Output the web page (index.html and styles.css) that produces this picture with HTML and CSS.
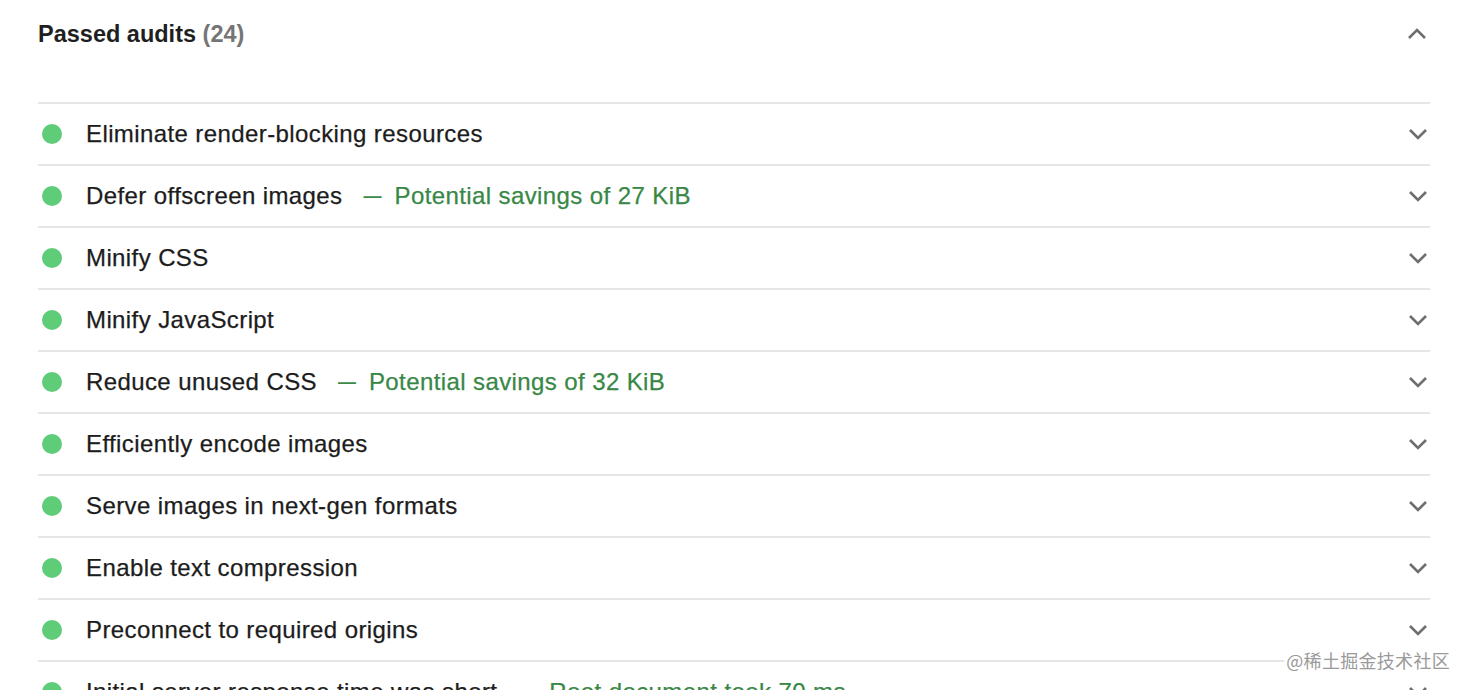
FILE: index.html
```html
<!DOCTYPE html>
<html>
<head>
<meta charset="utf-8">
<link rel="stylesheet" href="styles.css">
</head>
<body>
<div class="page">
  <div class="group-header">
    <div class="group-title">Passed audits <span class="count">(24)</span></div>
    <svg class="chev-up" width="22" height="14" viewBox="0 0 22 14"><path d="M3 11 L11 3 L19 11" fill="none" stroke="#6e6e6e" stroke-width="2.6"/></svg>
  </div>
  <div class="list">
    <div class="row"><span class="dot"></span><span class="title">Eliminate render-blocking resources</span><svg class="chev" width="22" height="14" viewBox="0 0 22 14"><path d="M3 3 L11 11 L19 3" fill="none" stroke="#6e6e6e" stroke-width="2.6"/></svg></div>
    <div class="row"><span class="dot"></span><span class="title">Defer offscreen images</span><span class="sep">—</span><span class="savings">Potential savings of 27 KiB</span><svg class="chev" width="22" height="14" viewBox="0 0 22 14"><path d="M3 3 L11 11 L19 3" fill="none" stroke="#6e6e6e" stroke-width="2.6"/></svg></div>
    <div class="row"><span class="dot"></span><span class="title">Minify CSS</span><svg class="chev" width="22" height="14" viewBox="0 0 22 14"><path d="M3 3 L11 11 L19 3" fill="none" stroke="#6e6e6e" stroke-width="2.6"/></svg></div>
    <div class="row"><span class="dot"></span><span class="title">Minify JavaScript</span><svg class="chev" width="22" height="14" viewBox="0 0 22 14"><path d="M3 3 L11 11 L19 3" fill="none" stroke="#6e6e6e" stroke-width="2.6"/></svg></div>
    <div class="row"><span class="dot"></span><span class="title">Reduce unused CSS</span><span class="sep">—</span><span class="savings">Potential savings of 32 KiB</span><svg class="chev" width="22" height="14" viewBox="0 0 22 14"><path d="M3 3 L11 11 L19 3" fill="none" stroke="#6e6e6e" stroke-width="2.6"/></svg></div>
    <div class="row"><span class="dot"></span><span class="title">Efficiently encode images</span><svg class="chev" width="22" height="14" viewBox="0 0 22 14"><path d="M3 3 L11 11 L19 3" fill="none" stroke="#6e6e6e" stroke-width="2.6"/></svg></div>
    <div class="row"><span class="dot"></span><span class="title">Serve images in next-gen formats</span><svg class="chev" width="22" height="14" viewBox="0 0 22 14"><path d="M3 3 L11 11 L19 3" fill="none" stroke="#6e6e6e" stroke-width="2.6"/></svg></div>
    <div class="row"><span class="dot"></span><span class="title">Enable text compression</span><svg class="chev" width="22" height="14" viewBox="0 0 22 14"><path d="M3 3 L11 11 L19 3" fill="none" stroke="#6e6e6e" stroke-width="2.6"/></svg></div>
    <div class="row"><span class="dot"></span><span class="title">Preconnect to required origins</span><svg class="chev" width="22" height="14" viewBox="0 0 22 14"><path d="M3 3 L11 11 L19 3" fill="none" stroke="#6e6e6e" stroke-width="2.6"/></svg></div>
    <div class="row"><span class="dot"></span><span class="title">Initial server response time was short</span><span class="sep">—</span><span class="savings">Root document took 70 ms</span><svg class="chev" width="22" height="14" viewBox="0 0 22 14"><path d="M3 3 L11 11 L19 3" fill="none" stroke="#6e6e6e" stroke-width="2.6"/></svg></div>
  </div>
  <div class="watermark">@稀土掘金技术社区</div>
</div>
</body>
</html>
```
FILE: styles.css
```css
html, body {
  margin: 0;
  padding: 0;
  background: #ffffff;
  overflow: hidden;
}
.page {
  font-family: "Liberation Sans", Arial, sans-serif;
  color: #1f1f1f;
  padding: 0 42px 0 38px;
  height: 690px;
  overflow: hidden;
  position: relative;
}
.group-header {
  display: flex;
  align-items: center;
  justify-content: space-between;
  height: 68px;
  margin-bottom: 34px;
}
.group-title {
  font-size: 23.5px;
  font-weight: bold;
}
.count {
  color: #757575;
}
.chev-up {
  margin-right: 2px;
}
.list {
  border-top: 2px solid #e6e6e6;
}
.row {
  display: flex;
  align-items: center;
  height: 60px;
  border-bottom: 2px solid #e6e6e6;
  font-size: 24px;
  letter-spacing: 0.4px;
}
.dot {
  width: 20px;
  height: 20px;
  border-radius: 50%;
  background: #5fcc78;
  margin-left: 4px;
  margin-right: 24px;
  flex: none;
}
.title {
  color: #1c1c1c;
  -webkit-text-stroke: 0.25px #1c1c1c;
}
.sep {
  color: #3c8a47;
  font-size: 18px;
  font-weight: bold;
  letter-spacing: 0;
  margin: 0 13px 0 21px;
}
.savings {
  color: #388746;
  -webkit-text-stroke: 0.25px #388746;
}
.chev {
  margin-left: auto;
  margin-right: 1px;
}
.watermark {
  position: absolute;
  right: 20px;
  top: 647px;
  font-family: "Noto Sans CJK SC", sans-serif;
  font-size: 18px;
  letter-spacing: 0.3px;
  color: #9a9a9a;
  background: rgba(255,255,255,0.85);
  padding: 0 2px;
}
```
